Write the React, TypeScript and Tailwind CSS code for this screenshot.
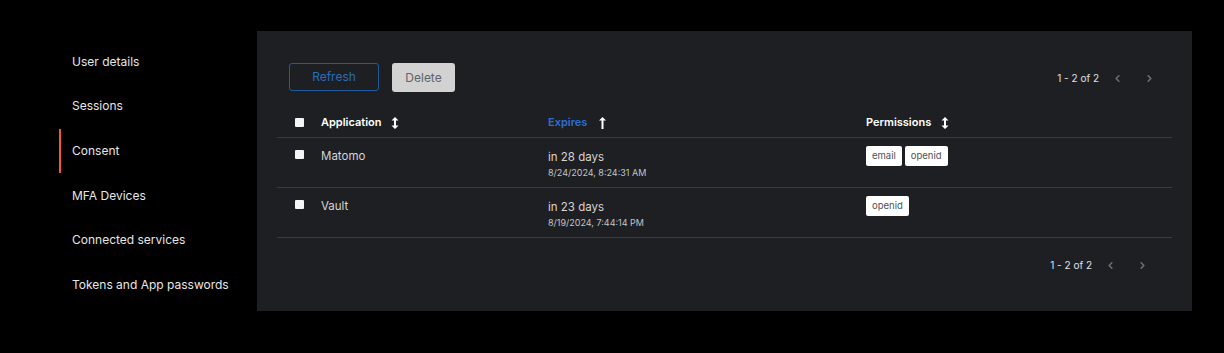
import { ChevronLeft, ChevronRight } from 'lucide-react'

const navItems = [
  'User details',
  'Sessions',
  'Consent',
  'MFA Devices',
  'Connected services',
  'Tokens and App passwords',
]

const rows = [
  { app: 'Matomo', rel: 'in 28 days', date: '8/24/2024, 8:24:31 AM', perms: ['email', 'openid'] },
  { app: 'Vault', rel: 'in 23 days', date: '8/19/2024, 7:44:14 PM', perms: ['openid'] },
]

function SortBoth() {
  return (
    <svg width="8" height="12" viewBox="0 0 8 12" className="text-white">
      <path d="M4 0 L7.5 3.5 H5 V8.5 H7.5 L4 12 L0.5 8.5 H3 V3.5 H0.5 Z" fill="currentColor" />
    </svg>
  )
}

function SortUp() {
  return (
    <svg width="7" height="12" viewBox="0 0 7 12" className="text-white">
      <path d="M3.5 0 L7 3.5 H4.5 V12 H2.5 V3.5 H0 Z" fill="currentColor" />
    </svg>
  )
}

function Check() {
  return <div className="w-[9px] h-[9px] rounded-[1px] bg-[#f5f5f5]" />
}

function Pager({ className }: { className?: string }) {
  return (
    <div className={`flex items-center text-[10px] text-[#e0e0e0] ${className ?? ''}`}>
      <span>1 - 2 of 2</span>
      <ChevronLeft className="ml-[13px] text-[#6a6e73]" size={11} strokeWidth={3.5} />
      <ChevronRight className="ml-[21px] text-[#6a6e73]" size={11} strokeWidth={3.5} />
    </div>
  )
}

export default function App() {
  return (
    <div
      className="w-[1224px] h-[353px] bg-black flex"
      style={{ fontFamily: 'Inter, "Liberation Sans", sans-serif' }}
    >
      <nav className="w-[257px] pl-[59px] pt-[39.5px]">
        {navItems.map((item) => (
          <div
            key={item}
            className={`h-[44.6px] flex items-center pl-[11px] text-[12px] text-[#e6e6e6] border-l-[2px] ${
              item === 'Consent' ? 'border-[#f4573d]' : 'border-transparent'
            }`}
          >
            {item}
          </div>
        ))}
      </nav>

      <main className="mt-[31px] w-[935px] h-[280px] bg-[#1e1f23] px-[20px]">
        <div className="flex items-center justify-between pt-[32px] pl-[12px] pr-[16px]">
          <div className="flex gap-[13px]">
            <button className="w-[90px] h-[28px] rounded-[3px] border border-[#1f5b9c] text-[#2a6cbc] text-[12px]">
              Refresh
            </button>
            <button className="w-[63px] h-[29px] rounded-[3px] bg-[#d2d2d2] text-[#5f6368] text-[12px]">
              Delete
            </button>
          </div>
          <Pager className="mt-[1px] mr-[1px]" />
        </div>

        <div className="mt-[16px]">
          <div className="h-[30px] flex items-center border-b border-[#393b3f] text-[11px] font-semibold text-white">
            <div className="w-[44px] pl-[18px]">
              <Check />
            </div>
            <div className="w-[227px] flex items-center gap-[9px]">
              Application <SortBoth />
            </div>
            <div className="w-[318px] flex items-center gap-[12px] text-[#2c6fcf]">
              Expires <SortUp />
            </div>
            <div className="flex items-center gap-[10px]">
              Permissions <SortBoth />
            </div>
          </div>

          {rows.map((r) => (
            <div key={r.app} className="h-[50px] flex items-start border-b border-[#393b3f] pt-[11px] text-[11.5px] text-[#d6d6d6]">
              <div className="w-[44px] pl-[18px] pt-[1px]">
                <Check />
              </div>
              <div className="w-[227px] leading-[14px]">{r.app}</div>
              <div className="w-[318px]">
                <div className="leading-[16px]">{r.rel}</div>
                <div className="text-[9px] text-[#c4c4c4] mt-[1px]">{r.date}</div>
              </div>
              <div className="flex gap-[3px] -mt-[3px]">
                {r.perms.map((p) => (
                  <span key={p} className="h-[20px] px-[6px] flex items-center rounded-[2px] bg-white text-[#4f5255] text-[9.5px]">
                    {p}
                  </span>
                ))}
              </div>
            </div>
          ))}
        </div>

        <div className="flex justify-end pr-[24px] pt-[20px]">
          <Pager />
        </div>
      </main>
    </div>
  )
}
